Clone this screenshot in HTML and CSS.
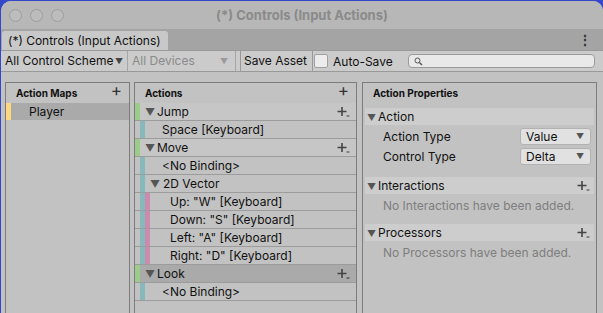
FILE: index.html
```html
<!DOCTYPE html>
<html lang="en">
<head>
  <meta charset="UTF-8">
  <meta name="viewport" content="width=device-width, initial-scale=1.0">
  <title>Controls (Input Actions)</title>
  <link rel="stylesheet" href="styles.css">
</head>
<body>
  <div class="window">
    <div class="titlebar">
      <div class="lights">
        <span class="light"></span>
        <span class="light"></span>
        <span class="light"></span>
      </div>
      <div class="title">(*) Controls (Input Actions)</div>
    </div>

    <div class="tabbar">
      <div class="tab">(*) Controls (Input Actions)</div>
      <div class="kebab">&#8942;</div>
    </div>

    <div class="toolbar">
      <div class="tool-drop scheme">All Control Scheme<span class="arrow">&#9660;</span></div>
      <div class="tool-drop devices disabled">All Devices<span class="arrow">&#9660;</span></div>
      <div class="tool-gap"></div>
      <div class="tool-btn">Save Asset</div>
      <label class="autosave"><span class="checkbox"></span>Auto-Save</label>
      <div class="search">
        <svg width="9" height="9" viewBox="0 0 9 9"><circle cx="3.5" cy="3.5" r="2.5" fill="none" stroke="#555" stroke-width="1"/><line x1="5.4" y1="5.4" x2="8" y2="8" stroke="#555" stroke-width="1.4"/></svg>
      </div>
    </div>

    <div class="main">
      <div class="panel maps">
        <div class="panel-head">Action Maps <span class="plus">+</span></div>
        <div class="row selected"><span class="strip yellow"></span><span class="label map-label">Player</span></div>
      </div>

      <div class="panel actions">
        <div class="panel-head">Actions <span class="plus">+</span></div>
        <div class="row action">
          <span class="strip green"></span><span class="tri">&#9660;</span><span class="label">Jump</span>
          <svg class="add" width="13" height="12" viewBox="0 0 13 12"><path d="M5 1v9M0.5 5.5h9" stroke="#444" stroke-width="1.6"/><path d="M9.5 10h3" stroke="#444" stroke-width="1.2"/></svg>
        </div>
        <div class="row bind"><span class="strip teal"></span><span class="label">Space [Keyboard]</span></div>
        <div class="row action">
          <span class="strip green"></span><span class="tri">&#9660;</span><span class="label">Move</span>
          <svg class="add" width="13" height="12" viewBox="0 0 13 12"><path d="M5 1v9M0.5 5.5h9" stroke="#444" stroke-width="1.6"/><path d="M9.5 10h3" stroke="#444" stroke-width="1.2"/></svg>
        </div>
        <div class="row bind"><span class="strip teal"></span><span class="label">&lt;No Binding&gt;</span></div>
        <div class="row bind"><span class="strip teal"></span><span class="tri">&#9660;</span><span class="label comp">2D Vector</span></div>
        <div class="row part"><span class="strip teal"></span><span class="strip pink"></span><span class="label">Up: "W" [Keyboard]</span></div>
        <div class="row part"><span class="strip teal"></span><span class="strip pink"></span><span class="label">Down: "S" [Keyboard]</span></div>
        <div class="row part"><span class="strip teal"></span><span class="strip pink"></span><span class="label">Left: "A" [Keyboard]</span></div>
        <div class="row part"><span class="strip teal"></span><span class="strip pink"></span><span class="label">Right: "D" [Keyboard]</span></div>
        <div class="row action selected">
          <span class="strip green"></span><span class="tri">&#9660;</span><span class="label">Look</span>
          <svg class="add" width="13" height="12" viewBox="0 0 13 12"><path d="M5 1v9M0.5 5.5h9" stroke="#444" stroke-width="1.6"/><path d="M9.5 10h3" stroke="#444" stroke-width="1.2"/></svg>
        </div>
        <div class="row bind"><span class="strip teal"></span><span class="label">&lt;No Binding&gt;</span></div>
      </div>

      <div class="panel props">
        <div class="panel-head">Action Properties</div>
        <div class="section">
          <div class="section-head"><span class="tri small">&#9660;</span>Action</div>
          <div class="fields">
            <div class="field">
              <span>Action Type</span>
              <div class="select">Value<span class="arrow">&#9660;</span></div>
            </div>
            <div class="field">
              <span>Control Type</span>
              <div class="select">Delta<span class="arrow">&#9660;</span></div>
            </div>
          </div>
        </div>
        <div class="section">
          <div class="section-head"><span class="tri small">&#9660;</span>Interactions
            <svg class="add" width="13" height="12" viewBox="0 0 13 12"><path d="M5 1v9M0.5 5.5h9" stroke="#444" stroke-width="1.6"/><path d="M9.5 10h3" stroke="#444" stroke-width="1.2"/></svg>
          </div>
          <div class="empty">No Interactions have been added.</div>
        </div>
        <div class="section">
          <div class="section-head"><span class="tri small">&#9660;</span>Processors
            <svg class="add" width="13" height="12" viewBox="0 0 13 12"><path d="M5 1v9M0.5 5.5h9" stroke="#444" stroke-width="1.6"/><path d="M9.5 10h3" stroke="#444" stroke-width="1.2"/></svg>
          </div>
          <div class="empty">No Processors have been added.</div>
        </div>
      </div>
    </div>
  </div>
</body>
</html>
```

FILE: styles.css
```css
body {
  margin: 0;
  background-color: #3447c9;
  font-family: Inter, "Noto Sans", sans-serif;
  font-size: 12px;
  color: #111;
  overflow: hidden;
}

.window {
  margin: 1px 0 0 1px;
  height: 312px;
  border-radius: 10px 10px 0 0;
  overflow: hidden;
  background-color: #c2c2c2;
  display: flex;
  flex-direction: column;
}

/* title bar */
.titlebar {
  height: 28px;
  background-color: #b7b7b7;
  position: relative;
  display: flex;
  align-items: center;
  justify-content: center;
}

.lights {
  position: absolute;
  left: 8px;
  top: 8px;
  display: flex;
  gap: 8px;
}

.light {
  width: 11px;
  height: 11px;
  border-radius: 50%;
  border: 1px solid #9d9d9d;
  background-color: #bcbcbc;
}

.title {
  font-weight: bold;
  font-size: 13px;
  color: #8a8a8a;
}

/* tab bar */
.tabbar {
  height: 21px;
  background-color: #a4a4a4;
  display: flex;
  align-items: flex-end;
  border-bottom: 1px solid #9a9a9a;
}

.tab {
  margin-left: 1px;
  height: 19px;
  width: 160px;
  padding-left: 6px;
  background-color: #c8c8c8;
  border-radius: 3px 3px 0 0;
  line-height: 19px;
}

.kebab {
  margin-left: auto;
  margin-right: 11px;
  align-self: center;
  font-size: 14px;
  font-weight: bold;
  color: #333;
}

/* toolbar */
.toolbar {
  height: 20px;
  background-color: #cbcbcb;
  border-bottom: 1px solid #999;
  display: flex;
  align-items: center;
}

.tool-drop {
  height: 20px;
  line-height: 20px;
  display: flex;
  border-right: 1px solid #a6a6a6;
  position: relative;
  white-space: nowrap;
  overflow: hidden;
}

.scheme {
  width: 122px;
  padding-left: 4px;
}

.devices {
  width: 103px;
  padding-left: 4px;
  color: #8a8a8a;
}

.tool-drop .arrow {
  position: absolute;
  right: 4px;
  font-size: 8px;
  color: #444;
  background-color: #cbcbcb;
  padding-left: 1px;
}

.devices .arrow {
  right: 7px;
  color: #999;
}

.tool-gap {
  width: 4px;
  height: 20px;
  border-right: 1px solid #999;
}

.tool-btn {
  height: 20px;
  line-height: 20px;
  padding: 0 5px 0 3px;
  border-right: 1px solid #999;
}

.autosave {
  display: flex;
  align-items: center;
  gap: 5px;
}

.checkbox {
  width: 12px;
  height: 12px;
  margin-left: 1px;
  background-color: #ececec;
  border: 1px solid #a0a0a0;
  border-radius: 2px;
}

.search {
  margin-left: 15px;
  width: 180px;
  height: 12px;
  padding-left: 5px;
  background-color: #e9e9e9;
  border: 1px solid #9a9a9a;
  border-radius: 4px;
  display: flex;
  align-items: center;
}

/* main area */
.main {
  flex: 1;
  display: flex;
  padding: 10px 0 0 4px;
  gap: 4px;
}

.panel {
  border: 1px solid #7d7d7d;
  border-bottom: none;
  background-color: #c2c2c2;
}

.maps {
  width: 123px;
}

.actions {
  width: 221px;
}

.props {
  width: 233px;
  margin-left: 1px;
}

.panel-head {
  height: 20px;
  line-height: 20px;
  padding-left: 10px;
  font-size: 10px;
  font-weight: bold;
  position: relative;
}

.panel-head .plus {
  position: absolute;
  right: 7px;
  top: -3px;
  font-size: 17px;
  font-weight: normal;
  color: #333;
}

.row {
  height: 17px;
  border-bottom: 1px solid #9c9c9c;
  display: flex;
  align-items: center;
  position: relative;
}

.row.selected {
  background-color: #aaaaaa;
}

.maps .row {
  border-bottom: none;
}

.row.action {
  background-color: #c6c6c6;
}

.row.action.selected {
  background-color: #aaaaaa;
}

.strip {
  width: 5px;
  height: 100%;
  flex-shrink: 0;
}

.yellow { background-color: #fcd882; }
.green { background-color: #9ccc8c; }
.teal { background-color: #86b8bc; margin-left: 5px; }
.pink { background-color: #cc8aae; }

.map-label {
  margin-left: 18px;
}

.tri {
  font-size: 10px;
  color: #555;
  margin-left: 5px;
  width: 12px;
}

.row.bind .label {
  margin-left: 17px;
}

.row.bind .label.comp {
  margin-left: 1px;
}

.row.part .label {
  margin-left: 20px;
}

.add {
  position: absolute;
  right: 6px;
  top: 3px;
}

/* properties */
.section {
  margin: 0 2px;
}

.section-head {
  margin-top: 5px;
  height: 17px;
  line-height: 17px;
  background-color: #cdcdcd;
  padding-left: 2px;
  position: relative;
}

.tri.small {
  margin-left: 0;
  margin-right: 1px;
  display: inline-block;
  width: 10px;
  font-size: 9px;
}

.section-head .add {
  top: 3px;
  right: 4px;
}

.fields {
  padding: 1px 0 6px;
}

.field {
  height: 20px;
  display: flex;
  align-items: center;
  justify-content: space-between;
  padding-left: 18px;
  padding-right: 3px;
}

.select {
  width: 64px;
  height: 15px;
  line-height: 15px;
  padding-left: 5px;
  background-color: #e1e1e1;
  border: 1px solid #b2b2b2;
  border-radius: 3px;
  position: relative;
}

.select .arrow {
  position: absolute;
  right: 6px;
  font-size: 8px;
  color: #555;
}

.empty {
  height: 25px;
  line-height: 24px;
  padding-left: 18px;
  color: #7e7e7e;
  margin-bottom: 1px;
}
```
